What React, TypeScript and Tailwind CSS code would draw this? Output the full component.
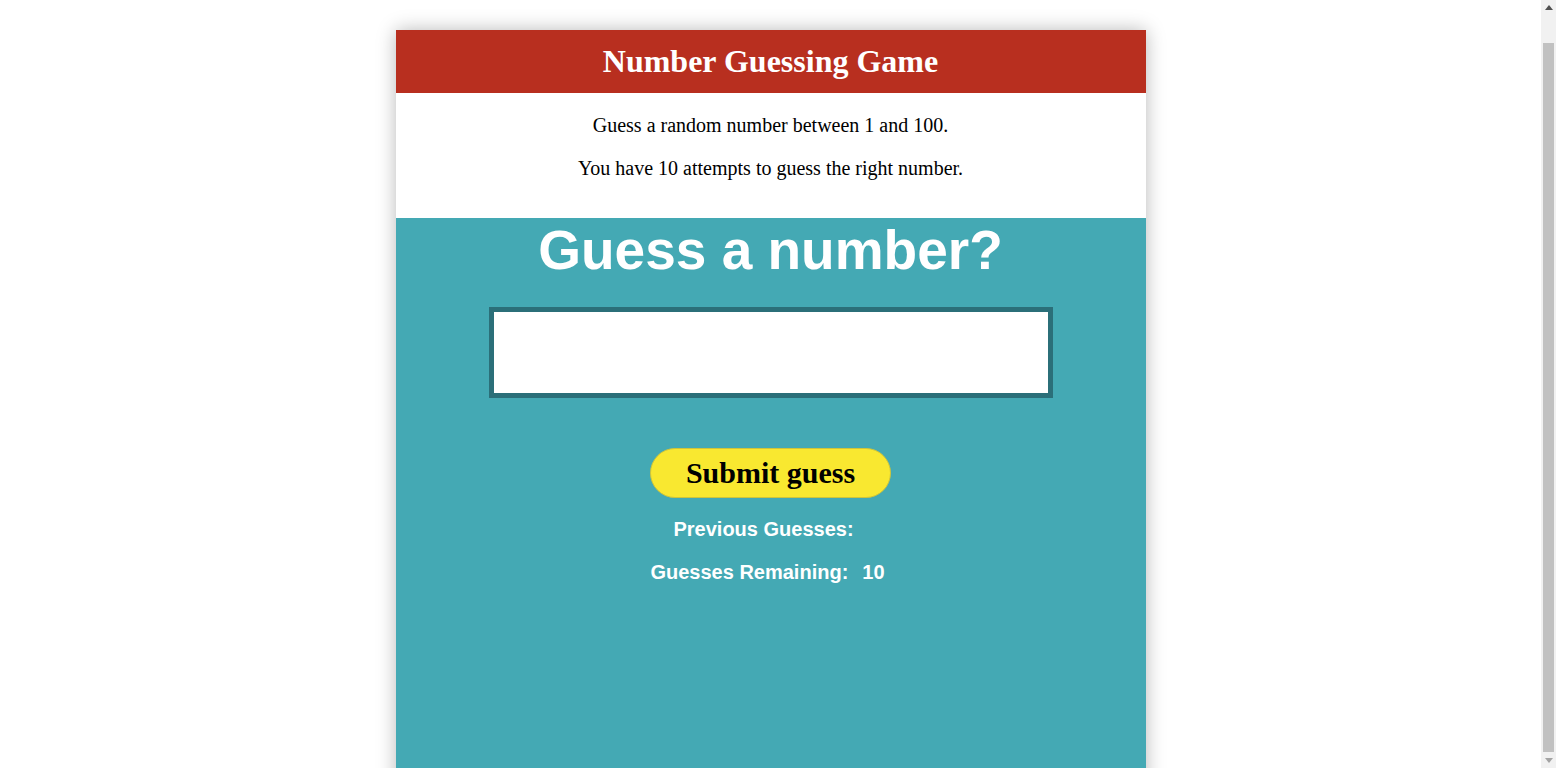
export default function App() {
  return (
    <div className="flex h-[768px] overflow-hidden bg-white font-['Liberation_Serif',serif]">
      <div className="flex-1 overflow-hidden pt-[30px]">
        <div className="mx-auto flex h-[800px] w-[750px] flex-col bg-white shadow-[0_0_18px_rgba(0,0,0,0.28)]">
          <header className="flex h-[63px] items-center justify-center bg-[#b82f1f]">
            <h1 className="text-[32px] font-bold leading-[37px] text-white">Number Guessing Game</h1>
          </header>
          <section className="flex h-[125px] flex-col items-center gap-[20px] pt-[21px] text-[20px] leading-[23px] text-black">
            <p>Guess a random number between 1 and 100.</p>
            <p>You have 10 attempts to guess the right number.</p>
          </section>
          <main className="flex flex-1 flex-col items-center bg-[#44a9b4] font-['Liberation_Sans',Arial,sans-serif] text-white">
            <h2 className="text-[55px] font-bold leading-[64px]">Guess a number?</h2>
            <input
              type="text"
              aria-label="guess"
              className="mt-[25px] h-[91px] w-[564px] border-[5px] border-[#2b6f79] bg-white text-black outline-none"
            />
            <button className="mt-[50px] h-[50px] w-[241px] rounded-full border border-[#cfc43a] bg-[#f9e830] font-['Liberation_Serif',serif] text-[30px] font-bold leading-[34px] text-black">
              Submit guess
            </button>
            <p className="mt-[20px] pr-[14px] text-[20px] font-bold leading-[23px]">Previous Guesses:</p>
            <p className="mt-[20px] pr-[6px] text-[20px] font-bold leading-[23px]">
              Guesses Remaining:<span className="ml-[14px]">10</span>
            </p>
          </main>
        </div>
      </div>
      <div className="flex w-[15px] shrink-0 flex-col items-center bg-[#f1f1f1]">
        <div className="flex h-[15px] w-full items-center justify-center">
          <svg width="8" height="5" viewBox="0 0 8 5">
            <polygon points="4,0 8,5 0,5" fill="#505050" />
          </svg>
        </div>
        <div className="mt-[28px] h-[709px] w-[11px] bg-[#c1c1c1]" />
        <div className="flex h-[16px] w-full items-center justify-center">
          <svg width="8" height="5" viewBox="0 0 8 5">
            <polygon points="0,0 8,0 4,5" fill="#a3a3a3" />
          </svg>
        </div>
      </div>
    </div>
  );
}
